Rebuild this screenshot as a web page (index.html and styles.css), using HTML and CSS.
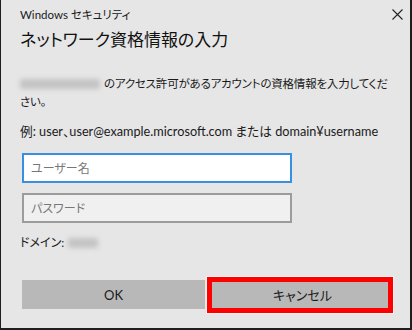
FILE: index.html
```html
<!DOCTYPE html>
<html lang="ja">
<head>
  <meta charset="UTF-8" />
  <meta name="viewport" content="width=device-width, initial-scale=1.0"/>
  <title>Windows セキュリティ</title>
  <link rel="stylesheet" href="styles.css">
</head>
<body>
  <div class="dialog">
    <div class="titlebar">
      <div class="app-name">Windows セキュリティ</div>
      <button class="close-btn" title="閉じる">
        <svg width="11" height="11" viewBox="0 0 11 11"><path d="M0.5 0.5 L10.5 10.5 M10.5 0.5 L0.5 10.5" stroke="#222" stroke-width="1.1" fill="none"/></svg>
      </button>
    </div>

    <h1 class="heading">ネットワーク資格情報の入力</h1>

    <p class="message"><span class="redacted host"></span>のアクセス許可があるアカウントの資格情報を入力してください。</p>

    <p class="example">例: user、user@example.microsoft.com または domain¥username</p>

    <div class="fields">
      <input class="field focused" type="text" placeholder="ユーザー名">
      <input class="field" type="password" placeholder="パスワード">
    </div>

    <p class="domain">ドメイン: <span class="redacted dom"></span></p>

    <div class="buttons">
      <button class="btn">OK</button>
      <div class="btn-wrap">
        <button class="btn cancel">キャンセル</button>
        <div class="highlight"></div>
      </div>
    </div>
  </div>
</body>
</html>
```

FILE: styles.css
```css
* { margin: 0; padding: 0; box-sizing: border-box; }
body {
  font-family: Lato, "Noto Sans CJK JP", sans-serif;
  font-feature-settings: "palt";
  background: #e6e6e6;
  color: #1a1a1a;
}
.dialog { width: 412px; height: 330px; background: #e6e6e6;
  border-left: 1px solid #1f1f1f; border-right: 2px solid #1f1f1f; border-bottom: 2px solid #1f1f1f;
  padding-left: 19px;
}
.titlebar { height: 26px; display: flex; align-items: center; justify-content: space-between;
  padding-top: 2px; padding-right: 7px;
}
.app-name { font-size: 11.5px; color: #1a1a1a; }
.close-btn { background: none; border: none; width: 11px; height: 11px; display: flex; cursor: pointer; }
.heading { font-size: 17px; font-weight: 400; line-height: 28px; color: #111; }
.message { margin-top: 21px; font-size: 11.5px; letter-spacing: -0.2px; line-height: 18px; padding-right: 18px; }
.redacted { display: inline-block; vertical-align: middle; background: #c4c4c4; filter: blur(2.5px); border-radius: 2px; }
.host { width: 80px; height: 10px; margin-right: 4px; margin-top: -2px; }
.dom { width: 30px; height: 10px; margin-left: 1px; margin-top: -2px; }
.example { margin-top: 11px; font-size: 12.7px; line-height: 18px; white-space: nowrap; }
.fields { margin-top: 13px; display: flex; flex-direction: column; gap: 10px; padding-left: 2px; }
.field { width: 270px; height: 30px; border: 2px solid #9c9c9c; background: #f0f0f0;
  font-family: inherit; font-feature-settings: "palt"; font-size: 12px; padding: 0 7px; outline: none; color: #1a1a1a;
}
.field::placeholder { color: #777; }
.field.focused { border-color: #3a8fe0; background: #fff; }
.domain { margin-top: 11px; font-size: 12px; line-height: 18px; }
.buttons { margin-top: 28px; display: flex; gap: 6px; padding-left: 2px; }
.btn { width: 183px; height: 29px; border: none; background: #b8b8b8; color: #1a1a1a;
  font-family: inherit; font-feature-settings: "palt"; font-size: 13px; cursor: pointer;
}
.btn-wrap { position: relative; }
.cancel { border: 1px solid #9fd0d6; }
.highlight { position: absolute; top: -3px; left: -4px; right: 1px; bottom: -4px;
  border: 5px solid #ff0000; outline: 1px solid #f4f4f4; pointer-events: none;
}
```
